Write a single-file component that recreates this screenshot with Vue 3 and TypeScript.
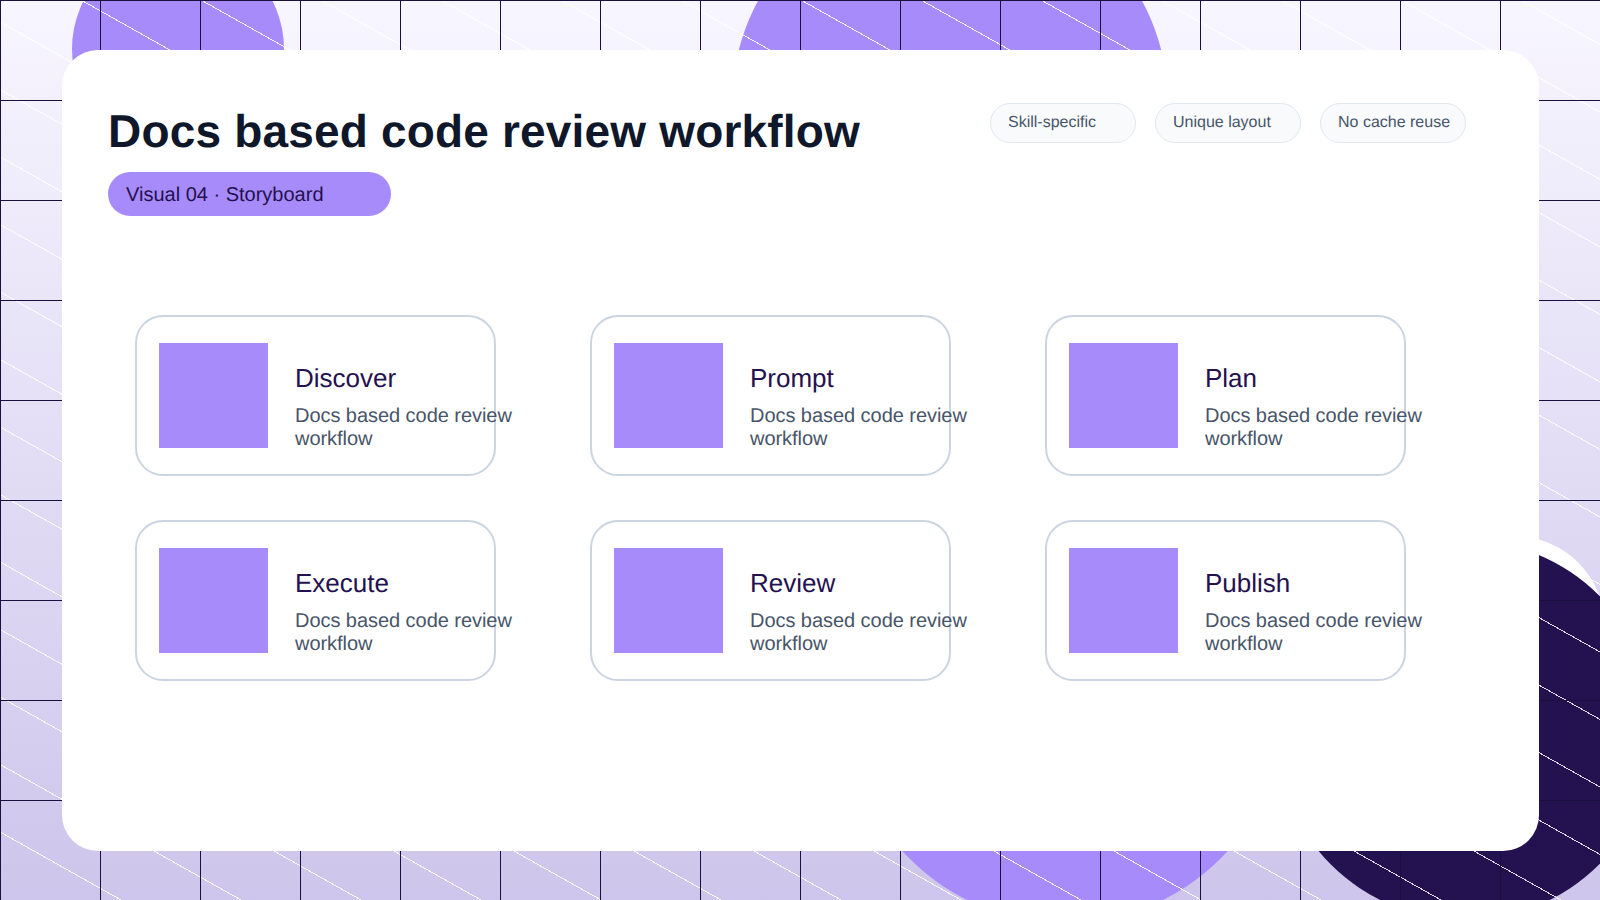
<template>
  <div class="page">
    <div class="backdrop">
      <div class="blob blob-left"></div>
      <div class="blob blob-top"></div>
      <div class="blob blob-bottom"></div>
      <div class="blob blob-white"></div>
      <div class="blob blob-dark"></div>
      <svg class="diagonals" viewBox="0 0 1600 900" width="1600" height="900">
        <line
          v-for="x in diagonalStarts"
          :key="x"
          :x1="x"
          y1="0"
          :x2="x + 1600"
          y2="900"
        />
      </svg>
      <div class="grid-lines"></div>
    </div>

    <main class="sheet">
      <header class="sheet-head">
        <div>
          <h1 class="title">Docs based code review workflow</h1>
          <div class="pill">Visual 04 · Storyboard</div>
        </div>
        <ul class="chips">
          <li v-for="chip in chips" :key="chip" class="chip">{{ chip }}</li>
        </ul>
      </header>

      <section class="steps">
        <article v-for="step in steps" :key="step" class="step">
          <div class="thumb"></div>
          <div class="step-text">
            <h2 class="step-title">{{ step }}</h2>
            <p class="step-desc">Docs based code review workflow</p>
          </div>
        </article>
      </section>
    </main>
  </div>
</template>

<script setup lang="ts">
const chips = ["Skill-specific", "Unique layout", "No cache reuse"];
const steps = ["Discover", "Prompt", "Plan", "Execute", "Review", "Publish"];

// lines run corner-parallel, one every 120px along the top edge
const diagonalStarts: number[] = [];
for (let x = 81 - 1680; x < 1600; x += 120) diagonalStarts.push(x);
</script>

<style>
html,
body {
  margin: 0;
  background: #fff;
}
</style>

<style scoped>
.page {
  position: relative;
  box-sizing: border-box;
  display: flex;
  width: 1600px;
  height: 900px;
  padding: 50px 61px 49px 62px;
  overflow: hidden;
  font-family: "Liberation Sans", Arial, sans-serif;
  text-rendering: geometricPrecision;
  background: linear-gradient(180deg, #f8f6ff 0%, #cdc5eb 100%);
}
.backdrop {
  position: absolute;
  inset: 0;
}
.blob {
  position: absolute;
  border-radius: 50%;
}
.blob-left {
  left: 72px;
  top: -57px;
  width: 212px;
  height: 212px;
  background: #a78bfa;
}
.blob-top {
  left: 732px;
  top: -114px;
  width: 436px;
  height: 436px;
  background: #a78bfa;
}
.blob-bottom {
  left: 845px;
  top: 483px;
  width: 440px;
  height: 440px;
  background: #a78bfa;
}
.blob-white {
  left: 1423px;
  top: 536px;
  width: 182px;
  height: 182px;
  background: #fff;
}
.blob-dark {
  left: 1275px;
  top: 540px;
  width: 380px;
  height: 380px;
  background: #24114f;
}
.grid-lines {
  position: absolute;
  inset: 0;
  background-image:
    linear-gradient(#1a1040 1px, transparent 1px),
    linear-gradient(90deg, #1a1040 1px, transparent 1px);
  background-size: 100px 100px;
}
.diagonals {
  position: absolute;
  inset: 0;
  shape-rendering: crispEdges;
}
.diagonals line {
  stroke: #fff;
  stroke-width: 1;
  stroke-opacity: 0.85;
}
.sheet {
  position: relative;
  flex: 1;
  box-sizing: border-box;
  padding: 53px 73px 0 46px;
  background: #fff;
  border-radius: 36px;
}
.sheet-head {
  display: flex;
  justify-content: space-between;
  align-items: flex-start;
}
.title {
  margin: 2px 0 14px;
  font-size: 46px;
  line-height: 53px;
  font-weight: 700;
  letter-spacing: 0.18px;
  color: #0f172a;
}
.pill {
  box-sizing: border-box;
  width: 283px;
  height: 44px;
  padding: 0 18px;
  border-radius: 22px;
  background: #a78bfa;
  color: #24114f;
  font-size: 20px;
  line-height: 46px;
}
.chips {
  display: flex;
  gap: 19px;
  margin: 0;
  padding: 0;
  list-style: none;
}
.chip {
  box-sizing: border-box;
  width: 146px;
  height: 40px;
  padding: 0 17px;
  border: 1px solid #e2e8f0;
  border-radius: 20px;
  background: #f8fafc;
  color: #475569;
  font-size: 16px;
  line-height: 38px;
  white-space: nowrap;
}
.steps {
  display: grid;
  grid-template-columns: repeat(3, 361px);
  column-gap: 94px;
  row-gap: 44px;
  margin: 99px 0 0 27px;
}
.step {
  box-sizing: border-box;
  display: flex;
  align-items: center;
  gap: 27px;
  height: 161px;
  padding: 0 22px;
  border: 2px solid #cbd5e1;
  border-radius: 28px;
}
.thumb {
  flex: none;
  width: 109px;
  height: 105px;
  background: #a78bfa;
}
.step-text {
  flex: none;
  width: 230px;
  padding-top: 23px;
}
.step-title {
  margin: 0 0 12px;
  font-size: 26px;
  line-height: 30px;
  font-weight: 400;
  color: #24114f;
}
.step-desc {
  margin: 0;
  font-size: 20px;
  line-height: 23px;
  letter-spacing: -0.05px;
  color: #475569;
}
</style>
